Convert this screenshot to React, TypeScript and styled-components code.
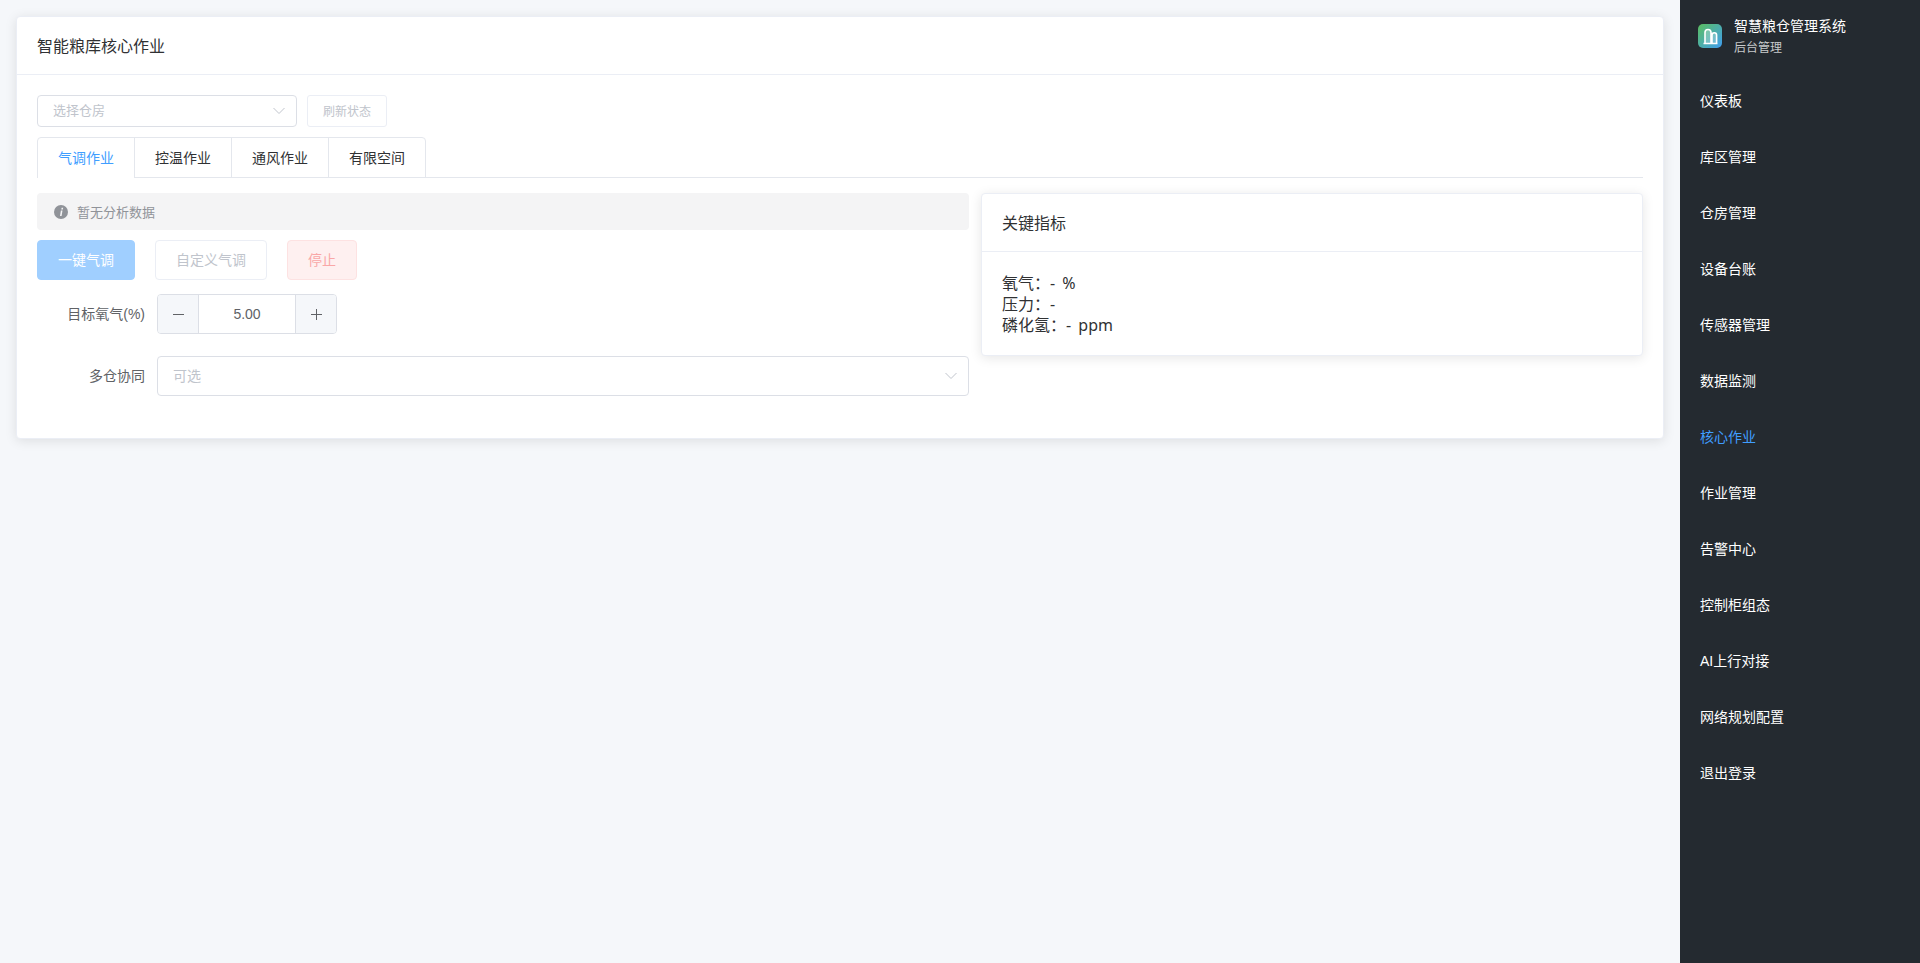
import React from "react";
import styled, { createGlobalStyle } from "styled-components";

const GlobalStyle = createGlobalStyle`
  html, body {
    margin: 0;
    padding: 0;
    height: 100%;
    background: #f5f7fa;
  }
  * {
    box-sizing: border-box;
  }
  body {
    font-family: "Liberation Sans", Arial, "Noto Sans CJK SC", sans-serif;
    color: #303133;
  }
`;

const Layout = styled.div`
  display: flex;
  height: 963px;
  overflow: hidden;
`;

const Main = styled.main`
  flex: 1;
  min-width: 0;
  padding: 16px 16px 0;
`;

const Card = styled.section`
  background: #fff;
  border: 1px solid #ebeef5;
  border-radius: 4px;
  box-shadow: 0 2px 12px 0 rgba(0, 0, 0, 0.1);
`;

const CardHeader = styled.header`
  height: 58px;
  padding: 0 20px 1px;
  display: flex;
  align-items: center;
  font-size: 16px;
  border-bottom: 1px solid #ebeef5;
`;

const CardBody = styled.div`
  padding: 20px;
`;

const Toolbar = styled.div`
  display: flex;
  gap: 10px;
  margin-bottom: 10px;
`;

const SelectBox = styled.div<{ $width?: number; $large?: boolean }>`
  width: ${(p) => (p.$width ? `${p.$width}px` : "100%")};
  height: ${(p) => (p.$large ? 40 : 32)}px;
  flex: ${(p) => (p.$width ? "none" : 1)};
  display: flex;
  align-items: center;
  justify-content: space-between;
  padding: 0 11px 0 15px;
  background: #fff;
  border: 1px solid #dcdfe6;
  border-radius: 4px;
  font-size: ${(p) => (p.$large ? 14 : 13)}px;
  color: #c0c4cc;
`;

const Placeholder = styled.span`
  margin-bottom: 3px;
`;

const Chevron = () => (
  <svg width="12" height="8" viewBox="0 0 12 8" fill="none">
    <path d="M0.5 1L6 6.5L11.5 1" stroke="#c0c4cc" strokeWidth="1" />
  </svg>
);

const Button = styled.button<{ $kind?: "primary" | "danger"; $small?: boolean }>`
  height: ${(p) => (p.$small ? 32 : 40)}px;
  padding: 0 ${(p) => (p.$small ? 15 : 20)}px 2px;
  font-family: inherit;
  font-size: ${(p) => (p.$small ? 12 : 14)}px;
  border-radius: ${(p) => (p.$small ? 3 : 4)}px;
  border: 1px solid
    ${(p) =>
      p.$kind === "primary" ? "#a0cfff" : p.$kind === "danger" ? "#fde2e2" : "#ebeef5"};
  background: ${(p) =>
    p.$kind === "primary" ? "#a0cfff" : p.$kind === "danger" ? "#fef0f0" : "#fff"};
  color: ${(p) =>
    p.$kind === "primary" ? "#fff" : p.$kind === "danger" ? "#f9a7a7" : "#c0c4cc"};
`;

const TabBar = styled.div`
  display: flex;
  height: 41px;
  border-bottom: 1px solid #e4e7ed;
  margin-bottom: 15px;
`;

const TabList = styled.div`
  display: flex;
  height: 41px;
  border: 1px solid #e4e7ed;
  border-radius: 4px 4px 0 0;
`;

const Tab = styled.div<{ $active?: boolean }>`
  width: 97px;
  height: 40px;
  padding-bottom: 2px;
  display: flex;
  align-items: center;
  justify-content: center;
  font-size: 14px;
  color: ${(p) => (p.$active ? "#409eff" : "#303133")};
  border-left: 1px solid #e4e7ed;
  border-bottom: 1px solid ${(p) => (p.$active ? "#fff" : "transparent")};
  &:first-child {
    width: 96px;
    border-left: none;
  }
`;

const Columns = styled.div`
  display: grid;
  grid-template-columns: 932px 1fr;
  gap: 12px;
  align-items: start;
`;

const Notice = styled.div`
  height: 37px;
  display: flex;
  align-items: center;
  gap: 9px;
  padding: 0 17px;
  background: #f4f4f5;
  border-radius: 4px;
  font-size: 13px;
  color: #909399;
  margin-bottom: 10px;
`;

const Actions = styled.div`
  display: flex;
  gap: 20px;
  margin-bottom: 14px;
`;

const FormRow = styled.div`
  display: flex;
  align-items: center;
  margin-bottom: 22px;
`;

const FormLabel = styled.label`
  width: 120px;
  flex: none;
  padding: 0 12px 3px 0;
  text-align: right;
  font-size: 14px;
  color: #606266;
`;

const Stepper = styled.div`
  width: 180px;
  height: 40px;
  display: flex;
  border: 1px solid #dcdfe6;
  border-radius: 4px;
  overflow: hidden;
  font-size: 14px;
  color: #606266;
`;

const StepButton = styled.div`
  width: 41px;
  display: flex;
  align-items: center;
  justify-content: center;
  background: #f5f7fa;
  &:first-child {
    border-right: 1px solid #dcdfe6;
  }
  &:last-child {
    border-left: 1px solid #dcdfe6;
  }
`;

const StepValue = styled.div`
  flex: 1;
  display: flex;
  align-items: center;
  justify-content: center;
`;

const MetricCard = styled(Card)`
  height: 163px;
`;

const MetricBody = styled.div`
  padding: 21px 20px 19px;
  font-family: "Noto Sans", "Noto Sans CJK SC", sans-serif;
  font-size: 16px;
  line-height: 21px;
  word-spacing: 3px;
`;

const Sidebar = styled.aside`
  width: 240px;
  flex: none;
  background: #242a30;
  color: #fff;
`;

const Brand = styled.div`
  height: 72px;
  padding: 17px 18px 0 18px;
  display: flex;
  gap: 12px;
`;

const BrandText = styled.div`
  display: flex;
  flex-direction: column;
  gap: 5px;
  font-size: 14px;
  line-height: 18px;
`;

const BrandSub = styled.span`
  font-size: 12px;
  line-height: 16px;
  color: #c8cacc;
`;

const Menu = styled.nav`
  display: flex;
  flex-direction: column;
`;

const MenuItem = styled.a<{ $active?: boolean }>`
  height: 56px;
  padding-left: 20px;
  display: flex;
  align-items: center;
  font-size: 14px;
  color: ${(p) => (p.$active ? "#409eff" : "#fff")};
`;

const LogoMark = styled.svg`
  margin-top: 7px;
  flex: none;
`;

const Logo = () => (
  <LogoMark width="24" height="24" viewBox="0 0 24 24">
    <defs>
      <linearGradient id="logoFill" x1="0" y1="0" x2="1" y2="1">
        <stop offset="0" stopColor="#5bbf5f" />
        <stop offset="1" stopColor="#3f9df0" />
      </linearGradient>
    </defs>
    <rect width="24" height="24" rx="5" fill="url(#logoFill)" />
    <path
      d="M7 19V8.5a3 3 0 0 1 6 0V19M14 19V11a2.3 2.3 0 0 1 4.6 0V19M5.5 19.5h14"
      fill="rgba(255,255,255,0.25)"
      stroke="#fff"
      strokeWidth="1.6"
    />
  </LogoMark>
);

const InfoIcon = () => (
  <svg width="14" height="14" viewBox="0 0 14 14">
    <circle cx="7" cy="7" r="7" fill="#909399" />
    <path d="M7.6 2.8h1.6l-.3 1.6H7.3zM6.9 5.6h1.6L7.6 11H6z" fill="#f4f4f5" />
  </svg>
);

const MinusIcon = () => (
  <svg width="11" height="11" viewBox="0 0 11 11">
    <path d="M0 5.5h11" stroke="#606266" strokeWidth="1" />
  </svg>
);

const PlusIcon = () => (
  <svg width="11" height="11" viewBox="0 0 11 11">
    <path d="M0 5.5h11M5.5 0v11" stroke="#606266" strokeWidth="1" />
  </svg>
);

const tabs = ["气调作业", "控温作业", "通风作业", "有限空间"];
const menu = [
  "仪表板",
  "库区管理",
  "仓房管理",
  "设备台账",
  "传感器管理",
  "数据监测",
  "核心作业",
  "作业管理",
  "告警中心",
  "控制柜组态",
  "AI上行对接",
  "网络规划配置",
  "退出登录",
];

export default function App() {
  return (
    <Layout>
      <GlobalStyle />
      <Main>
        <Card>
          <CardHeader>智能粮库核心作业</CardHeader>
          <CardBody>
            <Toolbar>
              <SelectBox $width={260}>
                <Placeholder>选择仓房</Placeholder>
                <Chevron />
              </SelectBox>
              <Button $small>刷新状态</Button>
            </Toolbar>
            <TabBar>
              <TabList>
                {tabs.map((t, i) => (
                  <Tab key={t} $active={i === 0}>
                    {t}
                  </Tab>
                ))}
              </TabList>
            </TabBar>
            <Columns>
              <div>
                <Notice>
                  <InfoIcon />
                  暂无分析数据
                </Notice>
                <Actions>
                  <Button $kind="primary">一键气调</Button>
                  <Button>自定义气调</Button>
                  <Button $kind="danger">停止</Button>
                </Actions>
                <FormRow>
                  <FormLabel>目标氧气(%)</FormLabel>
                  <Stepper>
                    <StepButton>
                      <MinusIcon />
                    </StepButton>
                    <StepValue>5.00</StepValue>
                    <StepButton>
                      <PlusIcon />
                    </StepButton>
                  </Stepper>
                </FormRow>
                <FormRow>
                  <FormLabel>多仓协同</FormLabel>
                  <SelectBox $large>
                    <Placeholder>可选</Placeholder>
                    <Chevron />
                  </SelectBox>
                </FormRow>
              </div>
              <MetricCard>
                <CardHeader>关键指标</CardHeader>
                <MetricBody>
                  <div>氧气：- %</div>
                  <div>压力：-</div>
                  <div>磷化氢：- ppm</div>
                </MetricBody>
              </MetricCard>
            </Columns>
          </CardBody>
        </Card>
      </Main>
      <Sidebar>
        <Brand>
          <Logo />
          <BrandText>
            智慧粮仓管理系统
            <BrandSub>后台管理</BrandSub>
          </BrandText>
        </Brand>
        <Menu>
          {menu.map((m) => (
            <MenuItem key={m} $active={m === "核心作业"}>
              {m}
            </MenuItem>
          ))}
        </Menu>
      </Sidebar>
    </Layout>
  );
}
